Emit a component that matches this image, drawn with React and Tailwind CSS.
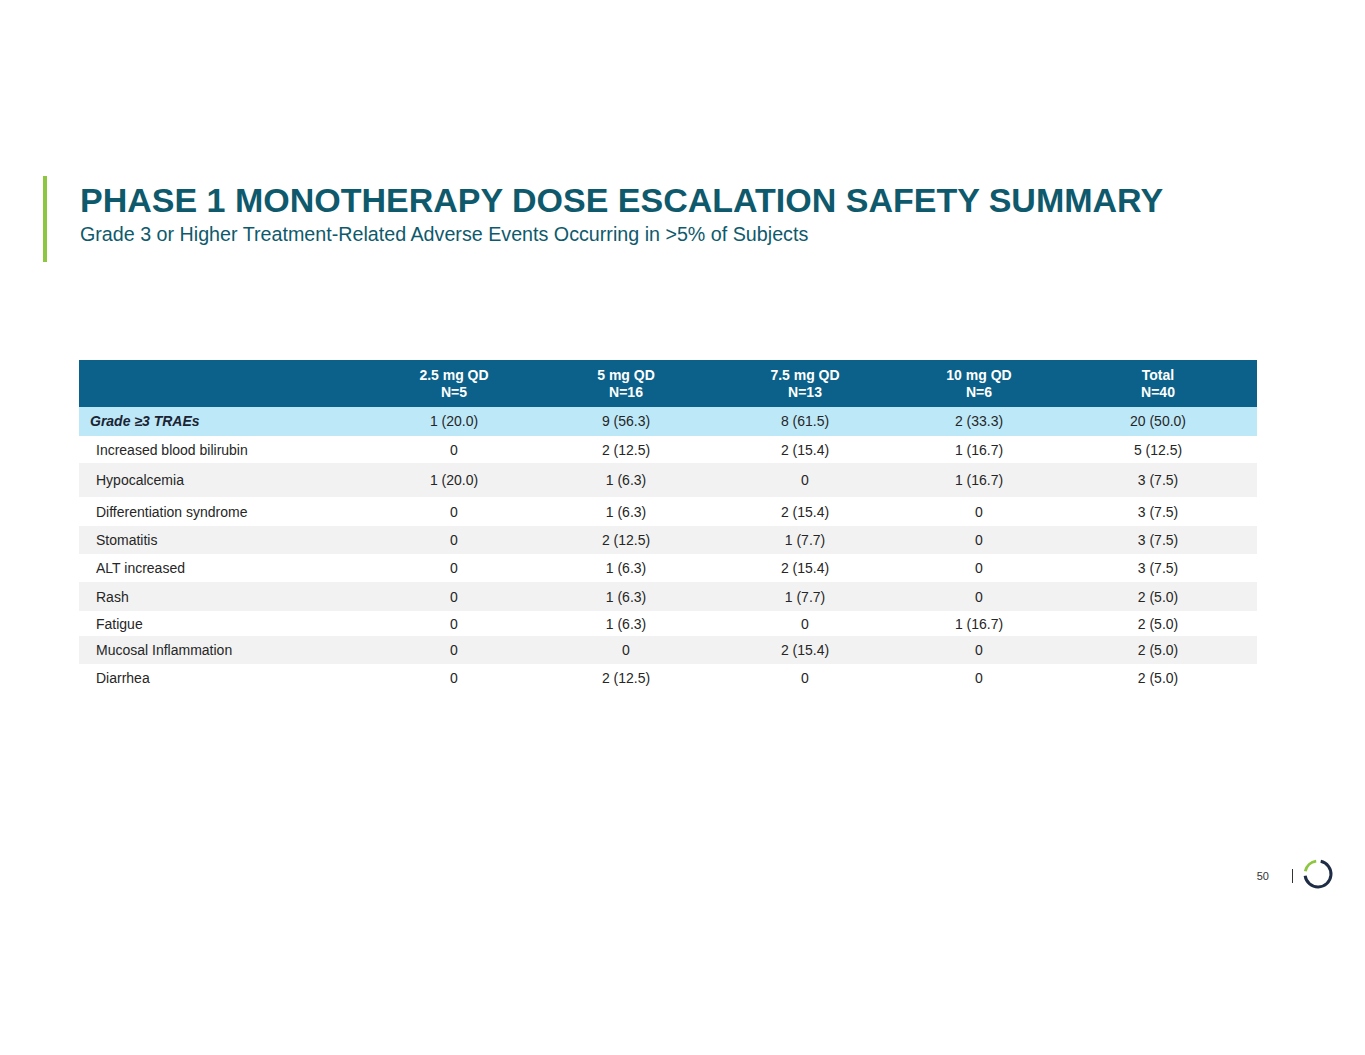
const columns = [
  ["2.5 mg QD", "N=5"],
  ["5 mg QD", "N=16"],
  ["7.5 mg QD", "N=13"],
  ["10 mg QD", "N=6"],
  ["Total", "N=40"],
];

const rows = [
  { label: "Increased blood bilirubin", values: ["0", "2 (12.5)", "2 (15.4)", "1 (16.7)", "5 (12.5)"], h: "h-[27px]", bg: "bg-white" },
  { label: "Hypocalcemia", values: ["1 (20.0)", "1 (6.3)", "0", "1 (16.7)", "3 (7.5)"], h: "h-[34px]", bg: "bg-[#f2f2f2]" },
  { label: "Differentiation syndrome", values: ["0", "1 (6.3)", "2 (15.4)", "0", "3 (7.5)"], h: "h-[29px]", bg: "bg-white" },
  { label: "Stomatitis", values: ["0", "2 (12.5)", "1 (7.7)", "0", "3 (7.5)"], h: "h-[28px]", bg: "bg-[#f2f2f2]" },
  { label: "ALT increased", values: ["0", "1 (6.3)", "2 (15.4)", "0", "3 (7.5)"], h: "h-[28px]", bg: "bg-white" },
  { label: "Rash", values: ["0", "1 (6.3)", "1 (7.7)", "0", "2 (5.0)"], h: "h-[29px]", bg: "bg-[#f2f2f2]" },
  { label: "Fatigue", values: ["0", "1 (6.3)", "0", "1 (16.7)", "2 (5.0)"], h: "h-[25px]", bg: "bg-white" },
  { label: "Mucosal Inflammation", values: ["0", "0", "2 (15.4)", "0", "2 (5.0)"], h: "h-[28px]", bg: "bg-[#f2f2f2]" },
  { label: "Diarrhea", values: ["0", "2 (12.5)", "0", "0", "2 (5.0)"], h: "h-[28px]", bg: "bg-white" },
];

const grid = "grid grid-cols-[288px_174px_170px_188px_160px_198px]";

function Logo() {
  return (
    <svg width="30" height="30" viewBox="0 0 30 30" fill="none">
      <path d="M17.7 2.29 A13 13 0 1 1 2.13 16.8" stroke="#1f2c45" strokeWidth="3" />
      <path d="M2.29 12.3 A13 13 0 0 1 13.2 2.13" stroke="#8dc63f" strokeWidth="3" />
    </svg>
  );
}

export default function App() {
  return (
    <div className="relative h-[1055px] w-[1365px] overflow-hidden bg-white font-['Liberation_Sans',Arial,sans-serif]">
      <div className="flex pl-[43px] pt-[176px]">
        <div className="h-[86px] w-[4px] bg-[#8dc63f]" />
        <div className="ml-[33px] mt-[5px]">
          <h1 className="text-[34px] font-bold leading-[38px] text-[#0e5a6c]">
            PHASE 1 MONOTHERAPY DOSE ESCALATION SAFETY SUMMARY
          </h1>
          <p className="mt-[4px] text-[19.7px] leading-[23px] text-[#0e5a6c]">
            Grade 3 or Higher Treatment-Related Adverse Events Occurring in &gt;5% of Subjects
          </p>
        </div>
      </div>

      <div className="ml-[79px] mt-[98px] w-[1178px] text-[14px] text-[#262626]">
        <div className={`${grid} h-[47px] items-center bg-[#0b6189] text-center font-bold leading-[17px] text-white`}>
          <div />
          {columns.map(([dose, n]) => (
            <div key={dose}>
              <div>{dose}</div>
              <div>{n}</div>
            </div>
          ))}
        </div>

        <div className={`${grid} h-[29px] items-center bg-[#bde8f8]`}>
          <div className="pl-[11px] font-bold italic text-[#1a2433]">Grade ≥3 TRAEs</div>
          {["1 (20.0)", "9 (56.3)", "8 (61.5)", "2 (33.3)", "20 (50.0)"].map((v, i) => (
            <div key={i} className="text-center">{v}</div>
          ))}
        </div>

        {rows.map((row) => (
          <div key={row.label} className={`${grid} ${row.h} ${row.bg} items-center pt-px`}>
            <div className="pl-[17px]">{row.label}</div>
            {row.values.map((v, i) => (
              <div key={i} className="text-center">{v}</div>
            ))}
          </div>
        ))}
      </div>

      <div className="mt-[167px] flex h-[30px] items-center justify-end pr-[32px]">
        <span className="mt-[5px] text-[11px] text-[#333]">50</span>
        <div className="ml-[23px] mt-[4px] h-[14px] w-px bg-[#333]" />
        <div className="ml-[10px]">
          <Logo />
        </div>
      </div>
    </div>
  );
}
